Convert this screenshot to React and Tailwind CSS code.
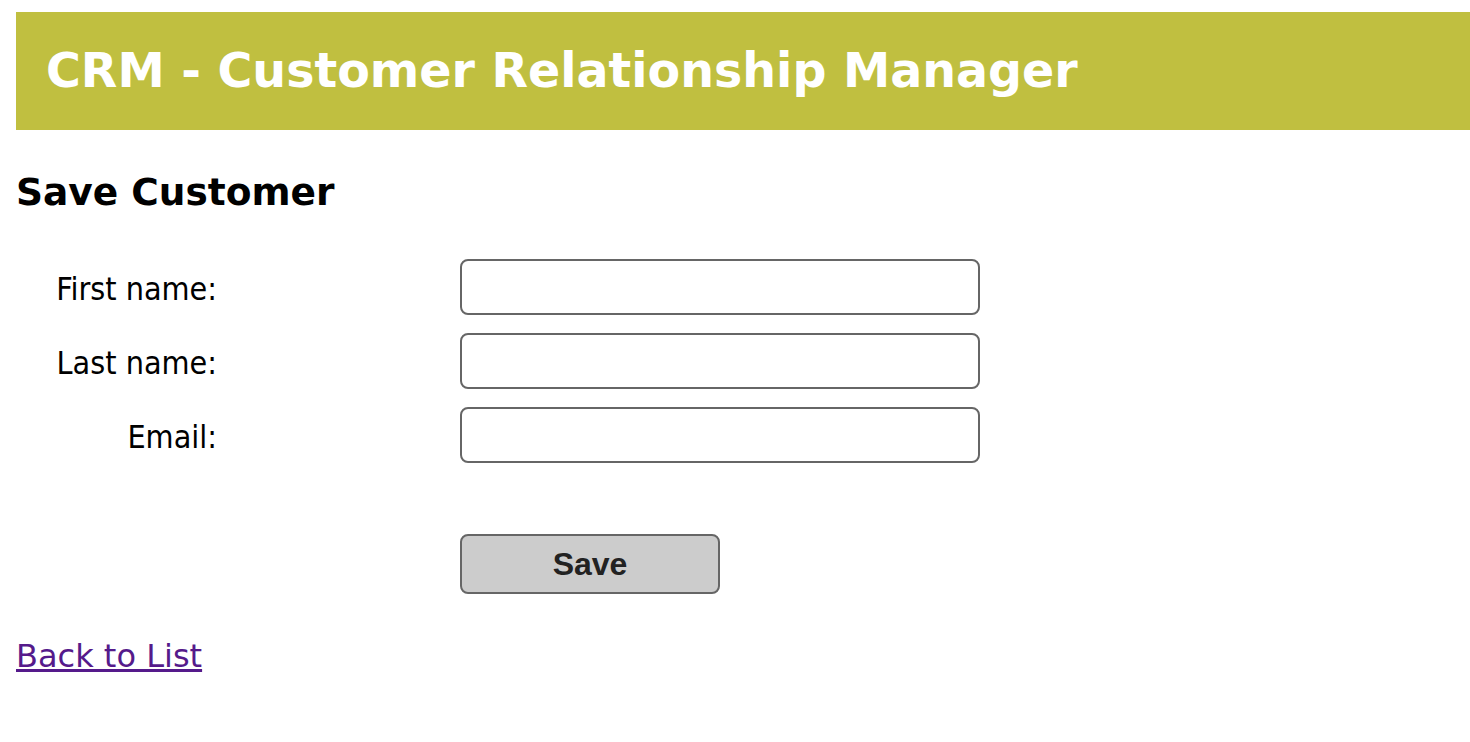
import React from 'react';

const fields = [
  { label: 'First name:', name: 'firstName' },
  { label: 'Last name:', name: 'lastName' },
  { label: 'Email:', name: 'email' },
];

const App = () => {
  return (
    <div className="min-h-screen bg-white pl-4 pt-3 font-['DejaVu_Sans',sans-serif] text-black">
      <div className="h-[118px] bg-[#c0bf40] pl-[30px] flex items-center">
        <h1 className="text-[47.5px] font-bold text-white leading-none">
          CRM - Customer Relationship Manager
        </h1>
      </div>

      <h2 className="mt-[44px] text-[37.5px] font-bold leading-none">Save Customer</h2>

      <form className="mt-[47px]" onSubmit={(e) => e.preventDefault()}>
        <div className="flex flex-col gap-[18px]">
          {fields.map((f) => (
            <div key={f.name} className="flex items-center">
              <label className="w-[201px] pt-1 text-right text-[32px] leading-none font-['DejaVu_Sans_Condensed',sans-serif]">
                {f.label}
              </label>
              <input
                type="text"
                name={f.name}
                className="ml-[243px] h-[56px] w-[520px] rounded-[8px] border-2 border-[#666] bg-white px-2"
              />
            </div>
          ))}
        </div>

        <div className="mt-[71px] pl-[444px]">
          <button
            type="submit"
            className="h-[60px] w-[260px] rounded-[8px] border-2 border-[#666] bg-[#ccc] text-[32px] font-bold text-[#222] font-['Liberation_Sans',sans-serif]"
          >
            Save
          </button>
        </div>
      </form>

      <p className="mt-[38px]">
        <a href="#" className="text-[32px] text-[#551a8b] underline">
          Back to List
        </a>
      </p>
    </div>
  );
};

export default App;
